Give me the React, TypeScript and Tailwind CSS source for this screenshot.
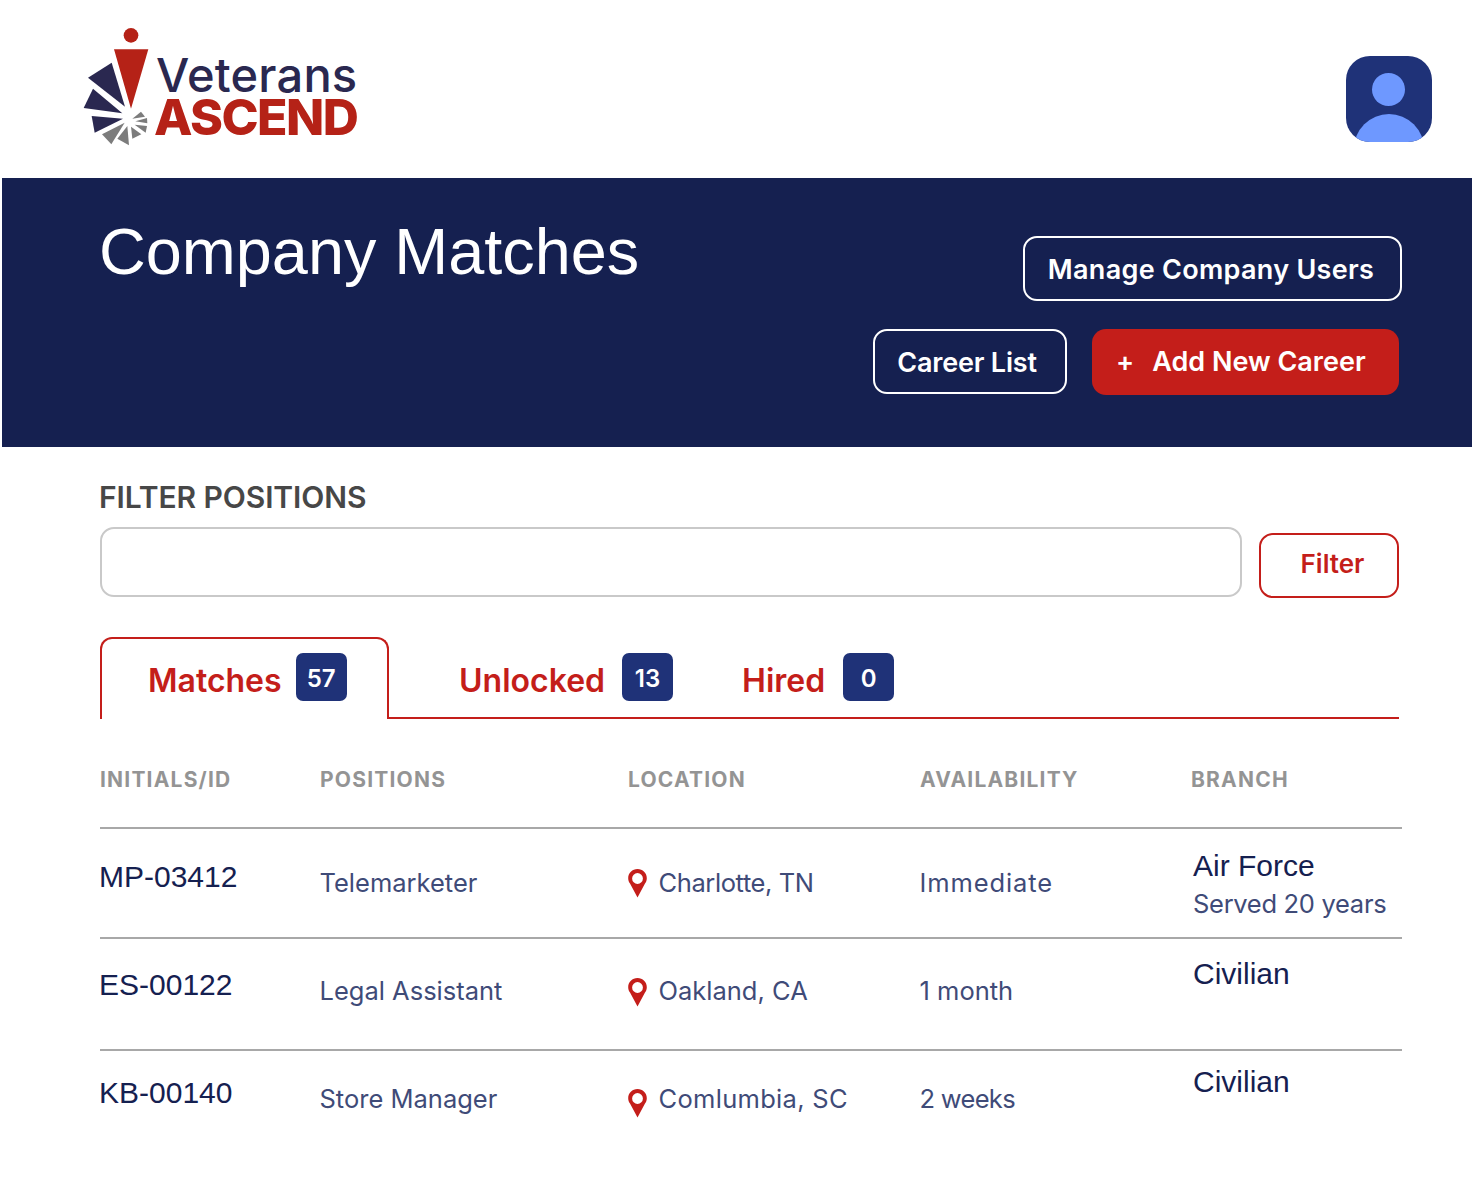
import React from 'react';

const poppins = { fontFamily: '"Inter", "Liberation Sans", sans-serif' };
const arial = { fontFamily: '"Liberation Sans", sans-serif' };

const rows = [
  { id: 'MP-03412', position: 'Telemarketer', location: 'Charlotte, TN', locationTracking: 'tracking-[-0.4px]', availability: 'Immediate', availabilityTracking: 'tracking-[0.9px]', branch: 'Air Force', served: 'Served 20 years', height: 'h-[110px]', idTop: 'pt-[28px]', cellTop: 'pt-[37px]', branchTop: 'pt-[17px]', pin: '' },
  { id: 'ES-00122', position: 'Legal Assistant', location: 'Oakland, CA', locationTracking: '', availability: '1 month', availabilityTracking: '', branch: 'Civilian', height: 'h-[112px]', idTop: 'pt-[26px]', cellTop: 'pt-[35px]', branchTop: 'pt-[15px]', pin: 'translate-y-[1px]' },
  { id: 'KB-00140', position: 'Store Manager', location: 'Comlumbia, SC', locationTracking: 'tracking-[0.3px]', availability: '2 weeks', availabilityTracking: 'tracking-[-0.7px]', branch: 'Civilian', height: 'h-[108px]', idTop: 'pt-[22px]', cellTop: 'pt-[31px]', branchTop: 'pt-[11px]', pin: 'translate-y-[4px]' },
];

function LogoMark() {
  return (
    <svg width="66" height="120" viewBox="40 20 198 360" className="mb-[6px] ml-[-1px] shrink-0">
      <circle cx="184" cy="48" r="22" fill="#b52217" />
      <polygon points="133,90 236,90 184,268" fill="#b52217" />
      <polygon points="55,175 126,130 166,262" fill="#2a2850" />
      <polygon points="70,208 158,282 42,266" fill="#2a2850" />
      <polygon points="66,290 160,298 75,340" fill="#2a2850" />
      <polygon points="97,345 165,310 125,375" fill="#7c7c7c" />
      <polygon points="143,358 173,320 178,378" fill="#7c7c7c" />
      <polygon points="188,358 184,322 215,345" fill="#7c7c7c" />
      <polygon points="195,316 232,320 228,340" fill="#7c7c7c" />
      <polygon points="197,306 232,296 233,312" fill="#7c7c7c" />
      <polygon points="188,298 214,277 226,292" fill="#7c7c7c" />
    </svg>
  );
}

function PinIcon({ className }: { className: string }) {
  return (
    <svg width="19" height="29" viewBox="0 0 19 29" className={`shrink-0 ${className}`}>
      <path fillRule="evenodd" d="M9.5 0C4.3 0 .2 4 .2 9.2c0 2.1.7 3.800 1.800 5.400L9.500 28.500l7.500-13.900c1.100-1.600 1.800-3.300 1.800-5.400C18.800 4 14.700 0 9.500 0zm0 4.100a5.400 5.400 0 1 1 0 10.800 5.400 5.400 0 0 1 0-10.800z" fill="#c41e1a" />
    </svg>
  );
}

function Badge({ value, className = 'mt-[-2px]' }: { value: number; className?: string }) {
  return (
    <span className={`flex h-[48px] w-[51px] items-center justify-center rounded-[7px] bg-[#1f3278] pt-[3px] text-[24px] font-semibold text-white ${className}`}>
      {value}
    </span>
  );
}

export default function App() {
  return (
    <div className="h-[1185px] w-full overflow-hidden bg-white" style={poppins}>
      <header className="flex h-[178px] items-center justify-between pl-[84px] pr-[41px]">
        <div className="flex items-center">
          <LogoMark />
          <div className="ml-[7px] mt-[14px] flex flex-col">
            <span className="text-[47px] font-medium leading-[42px] tracking-[0.2px] text-[#2a2850]">Veterans</span>
            <span className="ml-[-2px] text-[50px] font-extrabold leading-[42px] tracking-[-1.5px] text-[#b52217]">ASCEND</span>
          </div>
        </div>
        <div className="relative mt-[20px] h-[86px] w-[86px] overflow-hidden rounded-[24px] bg-[#1f3278]">
          <div className="absolute left-[26px] top-[17px] h-[33px] w-[33px] rounded-full bg-[#6e98ff]" />
          <div className="absolute left-[8px] top-[58px] h-[70px] w-[70px] rounded-full bg-[#6e98ff]" />
        </div>
      </header>

      <section className="ml-[2px] mr-[1px] flex h-[269px] justify-between bg-[#152050] pl-[97px] pr-[73px] text-white">
        <h1 className="mt-[35px] text-[64.8px] font-normal leading-[78px]" style={arial}>
          Company Matches
        </h1>
        <div className="flex flex-col items-end pt-[58px]">
          <button className="mr-[-3px] h-[65px] w-[379px] rounded-[14px] border-2 border-white pr-[3px] pt-[4px] text-[27px] font-semibold tracking-[0.3px]">
            Manage Company Users
          </button>
          <div className="mt-[28px] flex items-start gap-[25px]">
            <button className="h-[65px] w-[194px] rounded-[14px] border-2 border-white pr-[6px] pt-[3px] text-[27px] font-semibold tracking-[-0.2px]">
              Career List
            </button>
            <button className="flex h-[66px] w-[307px] items-center gap-[18px] rounded-[14px] bg-[#c41e1a] pl-[24px] text-[27px] font-semibold">
              <span>+</span>
              <span>Add New Career</span>
            </button>
          </div>
        </div>
      </section>

      <main className="pl-[100px] pr-[71px]">
        <div className="ml-[-1px] pt-[32px] text-[30px] font-semibold leading-[36px] tracking-[-0.1px] text-[#474747]">FILTER POSITIONS</div>
        <div className="mt-[12px] flex items-start gap-[17px]">
          <div className="h-[70px] w-[1142px] rounded-[14px] border-2 border-[#c9c9c9]" />
          <button className="mt-[6px] h-[65px] w-[140px] rounded-[14px] border-2 border-[#c41e1a] pb-[4px] pl-[7px] text-[26px] font-semibold text-[#c41e1a]">
            Filter
          </button>
        </div>

        <div className="mr-[3px] mt-[39px] flex h-[82px] items-start border-b-2 border-[#c41e1a]">
          <div className="mb-[-2px] flex h-[82px] w-[289px] items-center gap-[14px] rounded-t-[12px] border-2 border-b-0 border-[#c41e1a] bg-white pl-[46px]">
            <span className="pt-[4px] text-[32px] font-semibold text-[#c41e1a]">Matches</span>
            <Badge value={57} className="mt-[-4px]" />
          </div>
          <div className="flex h-[82px] items-center gap-[17px] pl-[70px]">
            <span className="pt-[6px] text-[32px] font-semibold text-[#c41e1a]">Unlocked</span>
            <Badge value={13} />
          </div>
          <div className="flex h-[82px] items-center gap-[18px] pl-[69px]">
            <span className="pt-[6px] text-[32px] font-semibold text-[#c41e1a]">Hired</span>
            <Badge value={0} />
          </div>
        </div>

        <div>
          <div className="grid h-[110px] grid-cols-[220px_308px_292px_271px_1fr] items-center border-b-2 border-[#a8a8a8] pt-[13px] text-[21px] font-bold tracking-[1.2px] text-[#949494]">
            <span>INITIALS/ID</span>
            <span>POSITIONS</span>
            <span>LOCATION</span>
            <span>AVAILABILITY</span>
            <span>BRANCH</span>
          </div>
          {rows.map((row, index) => (
            <div
              key={row.id}
              className={`grid grid-cols-[220px_308px_292px_272px_1fr] items-start ${row.height} ${index < rows.length - 1 ? 'border-b-2 border-[#a8a8a8]' : ''}`}
            >
              <span className={`${row.idTop} ml-[-1px] text-[30px] leading-[40px] text-[#152050]`} style={arial}>{row.id}</span>
              <span className={`${row.cellTop} ml-[-0.5px] text-[25.5px] leading-[34px] text-[#3f4b78]`}>{row.position}</span>
              <span className={`flex items-center gap-[11.5px] ${row.cellTop} ${row.locationTracking} text-[25.5px] leading-[34px] text-[#3f4b78]`}>
                <PinIcon className={row.pin} />
                {row.location}
              </span>
              <span className={`${row.cellTop} ${row.availabilityTracking} ml-[-0.5px] text-[25.5px] leading-[34px] text-[#3f4b78]`}>{row.availability}</span>
              <div className={row.branchTop}>
                <div className="ml-[1px] text-[30px] leading-[40px] text-[#152050]" style={arial}>{row.branch}</div>
                {row.served && <div className="ml-[1px] mt-[1px] text-[25.5px] leading-[34px] tracking-[-0.3px] text-[#3f4b78]">{row.served}</div>}
              </div>
            </div>
          ))}
        </div>
      </main>
    </div>
  );
}
